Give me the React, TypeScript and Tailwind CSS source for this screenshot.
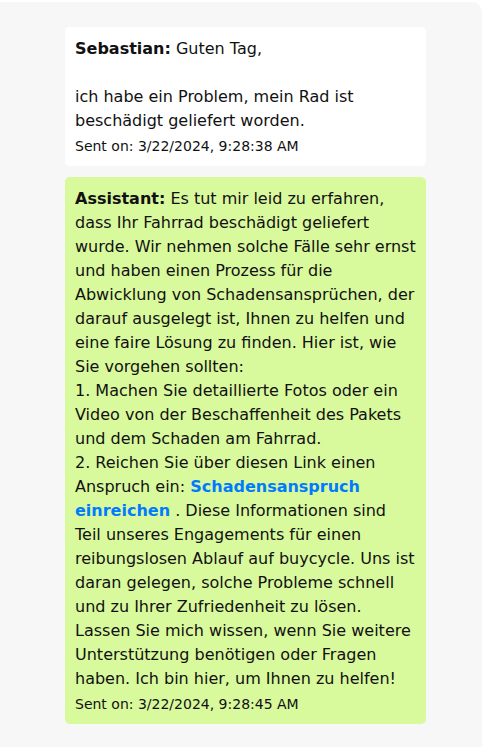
export default function App() {
  return (
    <div className="min-h-[747px] bg-white pt-[2px] font-['DejaVu_Sans',sans-serif] text-[#111]">
      <div className="min-h-[745px] rounded-tr-[10px] bg-[#f7f7f7] pt-[25px]">
        <div className="ml-[65px] flex w-[361px] flex-col gap-[11px]">
          {/* user message */}
          <div className="rounded-[5px] bg-white p-[10px]">
            <p className="text-[16px] leading-[24px]">
              <b>Sebastian:</b> Guten Tag,
              <br />
              <br />
              ich habe ein Problem, mein Rad ist beschädigt geliefert worden.
            </p>
            <div className="mt-[3px] text-[14px] leading-[20px]">Sent on: 3/22/2024, 9:28:38 AM</div>
          </div>

          {/* assistant reply */}
          <div className="rounded-[5px] bg-[#d9f99d] p-[10px]">
            <p className="text-[16px] leading-[24px]">
              <b>Assistant:</b> Es tut mir leid zu erfahren, dass Ihr Fahrrad beschädigt geliefert wurde. Wir
              nehmen solche Fälle sehr ernst und haben einen Prozess für die Abwicklung von Schadensansprüchen,
              der darauf ausgelegt ist, Ihnen zu helfen und eine faire Lösung zu finden. Hier ist, wie Sie
              vorgehen sollten:
              <br />
              1. Machen Sie detaillierte Fotos oder ein Video von der Beschaffenheit des Pakets und dem Schaden
              am Fahrrad.
              <br />
              2. Reichen Sie über diesen Link einen Anspruch ein:{' '}
              <a href="#" className="font-bold text-[#007bff]">
                Schadensanspruch einreichen
              </a>{' '}
              . Diese Informationen sind Teil unseres Engagements für einen reibungslosen Ablauf auf buycycle.
              Uns ist daran gelegen, solche Probleme schnell und zu Ihrer Zufriedenheit zu lösen. Lassen Sie
              mich wissen, wenn Sie weitere Unterstützung benötigen oder Fragen haben. Ich bin hier, um Ihnen
              zu helfen!
            </p>
            <div className="mt-[3px] text-[14px] leading-[20px]">Sent on: 3/22/2024, 9:28:45 AM</div>
          </div>
        </div>
      </div>
    </div>
  )
}
